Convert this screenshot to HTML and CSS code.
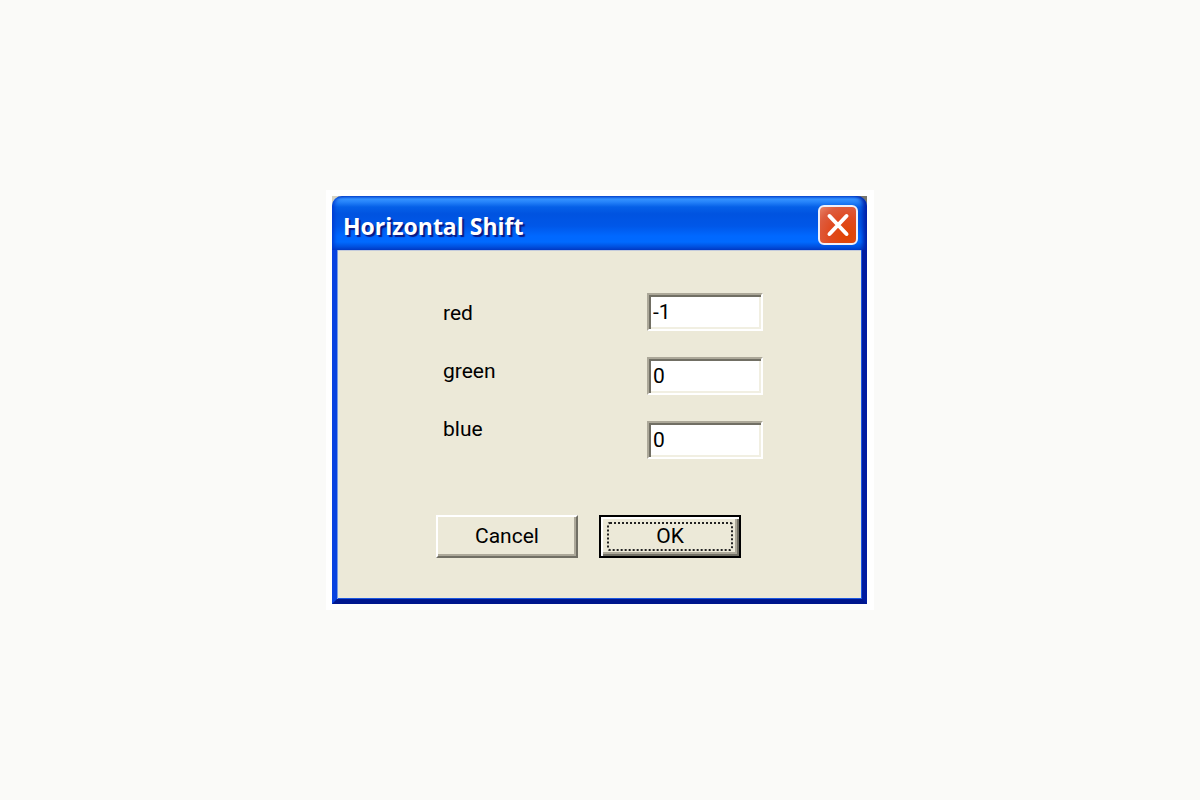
FILE: index.html
```
<!DOCTYPE html>
<html lang="en">
<head>
  <meta charset="UTF-8">
  <meta name="viewport" content="width=device-width, initial-scale=1.0">
  <title>Horizontal Shift</title>
  <link rel="stylesheet" href="styles.css">
</head>
<body>
  <div class="frame">
    <form class="window" onsubmit="return false">
      <div class="title-bar">
        <h1 class="title">Horizontal Shift</h1>
        <button class="close-btn" type="button" aria-label="Close">
          <svg viewBox="0 0 36 36" width="36" height="36">
            <path d="M9.500 9L26.500 27M26.500 9L9.500 27" stroke="#fff" stroke-width="4" stroke-linecap="round"/>
          </svg>
        </button>
      </div>
      <div class="window-body">
        <div class="fields">
          <div class="labels">
            <label for="red">red</label>
            <label for="green">green</label>
            <label for="blue">blue</label>
          </div>
          <div class="inputs">
            <input id="red" type="text" value="-1">
            <input id="green" type="text" value="0">
            <input id="blue" type="text" value="0">
          </div>
        </div>
        <div class="buttons">
          <button class="btn" type="button">Cancel</button>
          <button class="btn btn-default" type="submit"><span class="focus-ring">OK</span></button>
        </div>
      </div>
    </form>
  </div>
</body>
</html>
```
FILE: styles.css
```
* {
  box-sizing: border-box;
}
body {
  margin: 0;
  min-height: 100vh;
  display: flex;
  align-items: center;
  justify-content: center;
  background: #fafaf8;
  font-family: Roboto, "Liberation Sans", Arial, sans-serif;
  font-size: 21px;
  line-height: 24px;
  color: #000;
}
.frame {
  width: 548px;
  max-width: 100%;
  padding: 6px 7px 6px 6px;
  background: #fff;
}
/* the desktop shows behind the rounded corners */
.window {
  background: linear-gradient(90deg, #d8d5c4 50%, #77756c 50%);
}
.title-bar {
  display: flex;
  align-items: center;
  justify-content: space-between;
  height: 54px;
  padding: 4px 9px 0 11px;
  border-radius: 10px 10px 0 0;
  background: linear-gradient(#0a50d8 0, #3592ff 3px, #2583fa 6px, #0560e8 11px, #0053e0 18px, #0057e8 30px, #0068ff 40px, #006aff 46px, #0054e4 50px, #0040c8 54px);
  box-shadow: inset -6px 0 4px -2px #0020a8, inset 4px 0 4px -2px #0038d0;
}
.title {
  margin: 0;
  padding-top: 2px;
  font-family: "Open Sans", "Trebuchet MS", sans-serif;
  font-size: 23px;
  line-height: 30px;
  font-weight: 700;
  color: #fff;
  text-shadow: 2px 2px 1px #0a1883;
}
.close-btn {
  display: flex;
  width: 40px;
  height: 40px;
  padding: 0;
  border: 2px solid #eef0fa;
  border-radius: 6px;
  background: radial-gradient(circle at 75% 80%, #e04400 0, #e04a20 45%, #dd5c3e 75%, #e88468 100%);
}
.close-btn svg {
  display: block;
  fill: none;
}
.window-body {
  border: solid;
  border-width: 0 5px 5px 5px;
  border-color: #001ca0 #001ca0 #001890 #0842e0;
  background: #ece9d8;
  box-shadow: inset 1px 0 #7a9ce0, inset -1px 0 #1c58e0, inset 0 -1px #1c58e0, inset 0 1px #c4cbdc;
  padding: 43px 99px 41px 99px;
}
.fields {
  display: flex;
  justify-content: space-between;
  padding-left: 7px;
}
.labels {
  display: flex;
  flex-direction: column;
  gap: 34px;
  padding-top: 8px;
}
.inputs {
  display: flex;
  flex-direction: column;
  gap: 26px;
}
.inputs input {
  width: 116px;
  height: 38px;
  padding: 0 4px 1px;
  border: 2px solid;
  border-color: #aca899 #fff #fff #aca899;
  border-radius: 0;
  background: #fff;
  box-shadow: inset 2px 2px #716f64, inset -2px -2px #f1efe2;
  font: inherit;
  color: #000;
  outline: none;
}
.buttons {
  display: flex;
  gap: 21px;
  padding-top: 56px;
}
.btn {
  width: 142px;
  height: 43px;
  padding: 0 0 1px;
  border: 2px solid;
  border-color: #fff #716f64 #716f64 #fff;
  background: #ece9d8;
  box-shadow: inset -2px -2px #aca899;
  font: inherit;
  color: #000;
}
.btn-default {
  padding: 5px 6px;
  border-color: #000;
  box-shadow: inset 2px 2px #fff, inset -2px -2px #716f64, inset -4px -4px #aca899;
}
.focus-ring {
  display: block;
  height: 29px;
  border: 2px dotted #222;
  border-radius: 3px;
  line-height: 24px;
}
```
